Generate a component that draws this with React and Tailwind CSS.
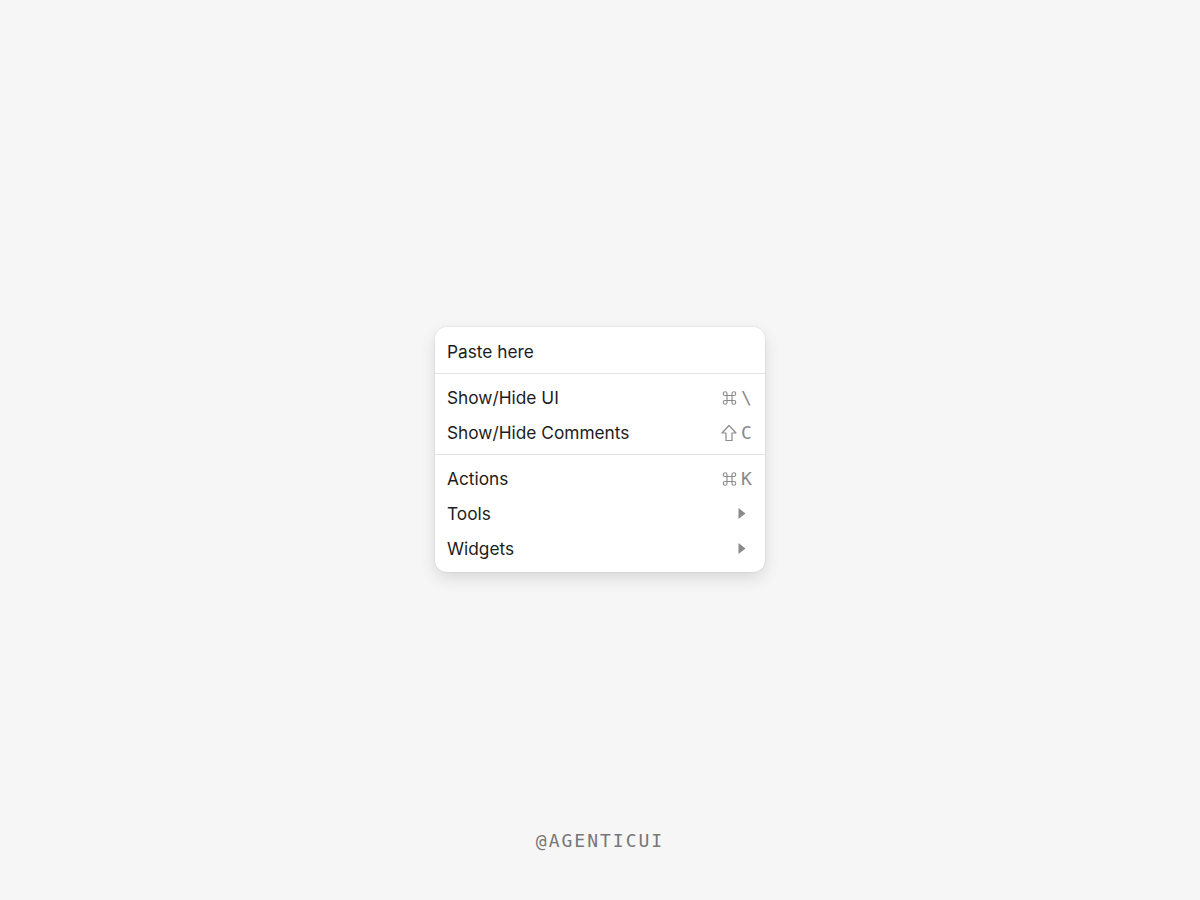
function Cmd() {
  return (
    <svg width="15" height="14" viewBox="0.5 0.5 12 11" fill="none" stroke="#8a8a8a" strokeWidth="0.9">
      <path d="M4.5 4 H8.5 V8 H4.5 Z" />
      <path d="M4.5 4 H3 A1.5 1.5 0 1 1 4.5 2.5 Z" />
      <path d="M8.5 4 V2.5 A1.5 1.5 0 1 1 10 4 Z" />
      <path d="M4.5 8 V9.5 A1.5 1.5 0 1 1 3 8 Z" />
      <path d="M8.5 8 H10 A1.5 1.5 0 1 1 8.5 9.5 Z" />
    </svg>
  )
}

function Shift() {
  return (
    <svg width="16" height="18" viewBox="0 0 16 18" fill="none" stroke="#8a8a8a" strokeWidth="1.2" strokeLinejoin="round">
      <path d="M8 1.5 L15 9 H11 V16.5 H5 V9 H1 Z" />
    </svg>
  )
}

function Shortcut({ icon, ch }) {
  return (
    <span className="flex items-center gap-[4px] text-[#8a8a8a]">
      {icon}
      <span className="w-[12px] font-['DejaVu_Sans_Mono',monospace] text-[18px] leading-none">{ch}</span>
    </span>
  )
}

function Caret() {
  return (
    <svg width="8" height="11" viewBox="0 0 8 11" className="mr-[7px]">
      <path d="M0.5 0 L7.5 5.5 L0.5 11 Z" fill="#8a8a8a" />
    </svg>
  )
}

function Item({ label, right }) {
  return (
    <div className="flex h-[35px] items-center justify-between pl-3 pr-[12px] pt-[2px]">
      <span>{label}</span>
      {right}
    </div>
  )
}

function Divider() {
  return <div className="my-[5px] h-px bg-[#e2e2e2]" />
}

export default function App() {
  return (
    <div className="flex min-h-[900px] flex-col items-center bg-[#f6f6f6] font-['Inter',sans-serif]">
      <div className="mt-[327px] w-[330px] rounded-[12px] bg-white pt-[6px] pb-[7px] text-[17.3px] text-[#1c1c1c] shadow-[0_0_0_1px_rgba(0,0,0,0.04),0_6px_16px_rgba(0,0,0,0.12)]">
        <Item label="Paste here" />
        <Divider />
        <Item label="Show/Hide UI" right={<Shortcut icon={<Cmd />} ch="\" />} />
        <Item label="Show/Hide Comments" right={<Shortcut icon={<Shift />} ch="C" />} />
        <Divider />
        <Item label="Actions" right={<Shortcut icon={<Cmd />} ch="K" />} />
        <Item label="Tools" right={<Caret />} />
        <Item label="Widgets" right={<Caret />} />
      </div>
      <div className="mt-[255px] font-['DejaVu_Sans_Mono',monospace] text-[18px] tracking-[2px] text-[#777]">
        @AGENTICUI
      </div>
    </div>
  )
}
